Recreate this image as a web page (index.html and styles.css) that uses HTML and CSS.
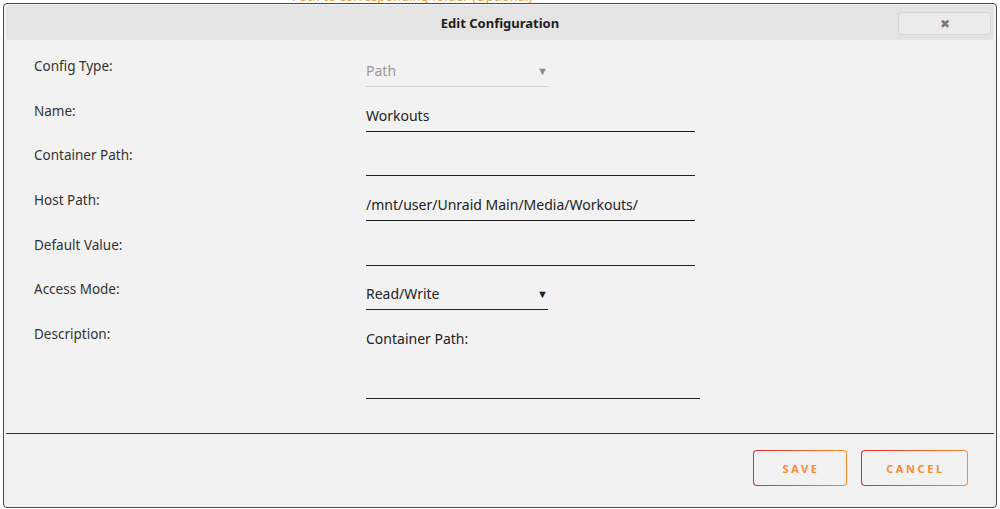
FILE: index.html
```html
<!DOCTYPE html>
<html lang="en">
<head>
    <meta charset="UTF-8">
    <meta name="viewport" content="width=device-width, initial-scale=1.0">
    <title>Edit Configuration</title>
    <link rel="stylesheet" href="styles.css">
</head>
<body>
    <div class="page">
        <p class="hint">Path to corresponding folder (Optional)</p>
    </div>

    <div class="dialog">
        <div class="dialog-title">
            <span>Edit Configuration</span>
            <button class="close-btn" type="button">&#10006;</button>
        </div>

        <form class="config-form">
            <div class="row">
                <label>Config Type:</label>
                <div class="field select disabled"><span>Path</span><i class="caret">&#9660;</i></div>
            </div>
            <div class="row">
                <label>Name:</label>
                <div class="field">Workouts</div>
            </div>
            <div class="row">
                <label>Container Path:</label>
                <div class="field"></div>
            </div>
            <div class="row">
                <label>Host Path:</label>
                <div class="field">/mnt/user/Unraid Main/Media/Workouts/</div>
            </div>
            <div class="row">
                <label>Default Value:</label>
                <div class="field"></div>
            </div>
            <div class="row">
                <label>Access Mode:</label>
                <div class="field select"><span>Read/Write</span><i class="caret">&#9660;</i></div>
            </div>
            <div class="row row-desc">
                <label>Description:</label>
                <div class="field textarea">Container Path:</div>
            </div>
        </form>

        <div class="dialog-footer">
            <button class="btn btn-save" type="button"><span>SAVE</span></button>
            <button class="btn btn-cancel" type="button"><span>CANCEL</span></button>
        </div>
    </div>
</body>
</html>
```

FILE: styles.css
```css
body {
    margin: 0;
    padding: 0;
    background: #fff;
    font-family: "Noto Sans", "Open Sans", sans-serif;
    color: #333;
    overflow: hidden;
}
.page {
    height: 509px;
}
.hint {
    margin: 0;
    padding: 0 0 0 292px;
    margin-top: -12px;
    font-size: 13px;
    line-height: 16px;
    color: #f0a040;
}

/* modal */
.dialog {
    position: absolute;
    top: 3px;
    left: 3px;
    width: 992px;
    height: 503px;
    background: #f2f2f2;
    border: 1px solid #4a4a4a;
    border-radius: 4px;
    display: flex;
    flex-direction: column;
}
.dialog-title {
    margin: 1px 2px 0;
    height: 35px;
    flex-shrink: 0;
    background: #e4e4e4;
    border-radius: 3px;
    display: flex;
    align-items: center;
    justify-content: center;
    position: relative;
    font-weight: bold;
    font-size: 13px;
    color: #1e1e1e;
}
.close-btn {
    position: absolute;
    right: 3px;
    top: 7px;
    width: 93px;
    height: 23px;
    background: #ebebeb;
    border: 1px solid #d6d6d6;
    border-radius: 4px;
    color: #7a7a7a;
    font-size: 12px;
    line-height: 1;
    padding: 0;
}

/* form rows */
.config-form {
    padding: 16px 0 0 30px;
}
.row {
    display: grid;
    grid-template-columns: 332px 329px;
    height: 44.7px;
    font-size: 13.5px;
}
.row label {
    line-height: 20px;
    color: #333;
}
.field {
    margin-top: 5px;
    height: 20px;
    line-height: 20px;
    padding-bottom: 5px;
    border-bottom: 1px solid #222;
    color: #222;
    font-size: 14px;
}
.select {
    width: 182px;
    display: flex;
    justify-content: space-between;
}
.caret {
    font-style: normal;
    font-size: 11px;
}
.disabled {
    color: #999;
    border-bottom-color: #d0d0d0;
}
.disabled .caret {
    color: #888;
}
.row-desc {
    height: auto;
    grid-template-columns: 332px 334px;
}
.textarea {
    height: 69px;
    padding-bottom: 0;
}

/* footer */
.dialog-footer {
    margin: auto 2px 0;
    border-top: 1px solid #333;
    height: 74px;
    flex-shrink: 0;
    display: flex;
    justify-content: flex-end;
    align-items: flex-start;
    gap: 14px;
    padding: 16px 26px 0 0;
    box-sizing: border-box;
}
.btn {
    height: 36px;
    padding: 1px;
    border: none;
    border-radius: 4px;
    background: linear-gradient(90deg, #e22828, #ff8b2f);
    font-family: inherit;
    cursor: pointer;
}
.btn-save {
    width: 94px;
}
.btn-cancel {
    width: 107px;
}
.btn span {
    display: flex;
    align-items: center;
    justify-content: center;
    height: 100%;
    padding-left: 2px;
    background: #f2f2f2;
    border-radius: 3px;
    font-size: 11px;
    font-weight: bold;
    letter-spacing: 2.6px;
    color: #fb8a35;
}
```
